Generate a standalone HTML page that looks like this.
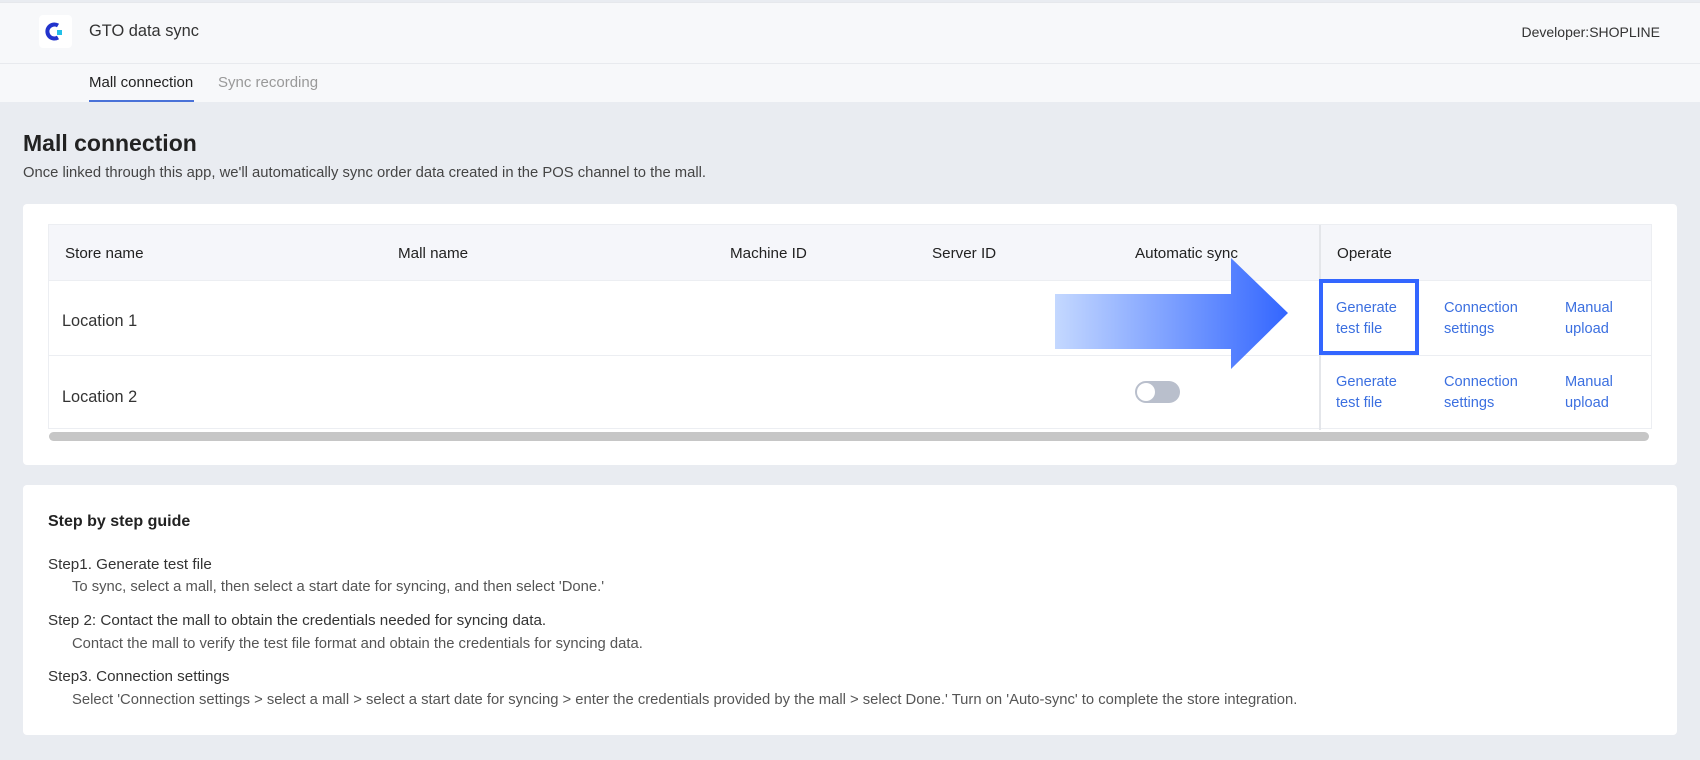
<!DOCTYPE html>
<html><head><meta charset="utf-8"><style>
*{box-sizing:border-box;margin:0;padding:0}
body{width:1700px;height:760px;overflow:hidden;background:#e9ecf1;font-family:"Liberation Sans",sans-serif;color:#222;position:relative}
.a{position:absolute;white-space:nowrap}
.hdr{position:absolute;left:0;top:2px;width:1700px;height:100px;background:#f7f8fa;border-top:1px solid #e6e8ec}
.card{position:absolute;left:23px;width:1654px;background:#fff;border-radius:4px}
.th{font-size:15.2px;color:#222}
.lk{font-size:14.6px;color:#3b6fe0;line-height:20.5px}
.gd{font-size:15.2px;color:#333}
.gs{font-size:14.8px;color:#555}
</style></head><body>
<div class="hdr">
 <div style="position:absolute;left:0;top:60px;width:1700px;border-top:1px solid #e8eaee"></div>
</div>
<div class="a" style="left:39px;top:15px;width:33px;height:33px;background:#fff;border-radius:4px">
 <svg width="33" height="33" viewBox="0 0 33 33"><path d="M19 10.5A7 7 0 1 0 19 22.5" fill="none" stroke="#2233cc" stroke-width="4"/><rect x="18" y="15" width="5" height="5" fill="#22c0e8"/></svg>
</div>
<div class="a" style="left:89px;top:22px;font-size:16.4px;color:#333">GTO data sync</div>
<div class="a" style="right:40px;top:24px;font-size:14px;color:#333">Developer:SHOPLINE</div>
<div class="a" style="left:89px;top:74px;font-size:15px;color:#222">Mall connection</div>
<div class="a" style="left:218px;top:74px;font-size:15px;color:#999">Sync recording</div>
<div class="a" style="left:89px;top:100px;width:105px;height:2px;background:#4a72d8"></div>

<div class="a" style="left:23px;top:130px;font-size:23px;font-weight:bold;color:#222">Mall connection</div>
<div class="a" style="left:23px;top:165px;font-size:14.8px;color:#444">Once linked through this app, we'll automatically sync order data created in the POS channel to the mall.</div>

<div class="card" style="top:204px;height:261px">
 <div style="position:absolute;left:25px;top:20px;width:1604px;height:205px;border:1px solid #eceef2">
  <div style="position:absolute;left:0;top:0;width:100%;height:56px;background:#f5f6fa;border-bottom:1px solid #eceef2"></div>
  <div style="position:absolute;left:0;top:130px;width:100%;border-top:1px solid #eceef2"></div>
  <div style="position:absolute;left:1270px;top:0;width:2px;height:205px;background:#e4e6ea"></div>
 </div>
</div>
<div class="a th" style="left:65px;top:245px">Store name</div>
<div class="a th" style="left:398px;top:245px">Mall name</div>
<div class="a th" style="left:730px;top:245px">Machine ID</div>
<div class="a th" style="left:932px;top:245px">Server ID</div>
<div class="a th" style="left:1135px;top:245px">Automatic sync</div>
<div class="a th" style="left:1337px;top:245px">Operate</div>
<div class="a" style="left:62px;top:312px;font-size:16.3px;color:#333">Location 1</div>
<div class="a" style="left:62px;top:388px;font-size:16.3px;color:#333">Location 2</div>
<div class="a lk" style="left:1336px;top:298px">Generate<br>test file</div>
<div class="a lk" style="left:1444px;top:298px">Connection<br>settings</div>
<div class="a lk" style="left:1565px;top:298px">Manual<br>upload</div>
<div class="a lk" style="left:1336px;top:372px">Generate<br>test file</div>
<div class="a lk" style="left:1444px;top:372px">Connection<br>settings</div>
<div class="a lk" style="left:1565px;top:372px">Manual<br>upload</div>
<div class="a" style="left:1319px;top:279px;width:100px;height:76px;border:4px solid #3366ff"></div>
<div class="a" style="left:1135px;top:381px;width:45px;height:22px;border-radius:11px;background:#b9bfcc"><div style="position:absolute;left:2px;top:2px;width:18px;height:18px;border-radius:50%;background:#fff"></div></div>
<div class="a" style="left:49px;top:432px;width:1600px;height:9px;border-radius:5px;background:#c6c6c6"></div>
<svg class="a" style="left:1050px;top:255px" width="245" height="115" viewBox="0 0 245 115">
 <defs><linearGradient id="g" x1="0" x2="1"><stop offset="0" stop-color="#c4d8ff"/><stop offset="1" stop-color="#3366ff"/></linearGradient></defs>
 <path d="M5 39H181V3L238 58L181 114V94H5Z" fill="url(#g)"/>
</svg>

<div class="card" style="top:485px;height:250px"></div>
<div class="a" style="left:48px;top:513px;font-size:16px;font-weight:bold;color:#222">Step by step guide</div>
<div class="a gd" style="left:48px;top:556px">Step1. Generate test file</div>
<div class="a gs" style="left:72px;top:579px">To sync, select a mall, then select a start date for syncing, and then select 'Done.'</div>
<div class="a gd" style="left:48px;top:612px">Step 2: Contact the mall to obtain the credentials needed for syncing data.</div>
<div class="a gs" style="left:72px;top:636px">Contact the mall to verify the test file format and obtain the credentials for syncing data.</div>
<div class="a gd" style="left:48px;top:668px">Step3. Connection settings</div>
<div class="a gs" style="left:72px;top:692px">Select 'Connection settings &gt; select a mall &gt; select a start date for syncing &gt; enter the credentials provided by the mall &gt; select Done.' Turn on 'Auto-sync' to complete the store integration.</div>
</body></html>
